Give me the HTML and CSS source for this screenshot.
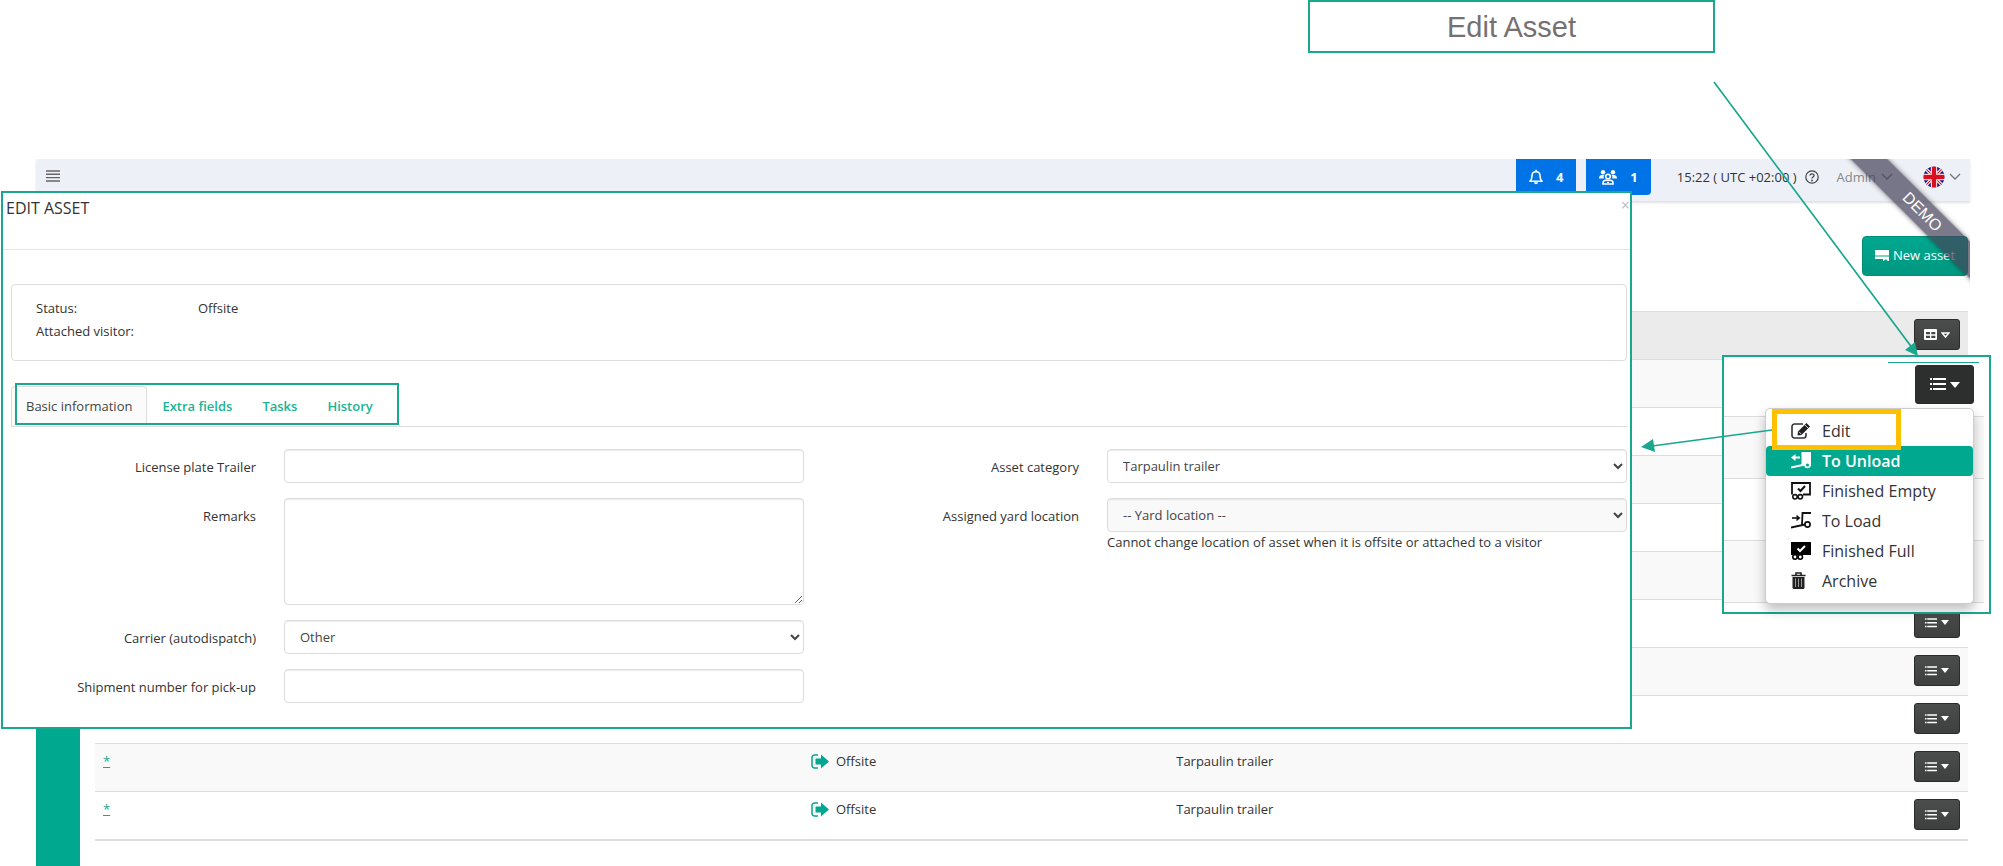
FILE: index.html
```html
<!DOCTYPE html>
<html lang="en">
<head>
    <meta charset="UTF-8">
    <meta name="viewport" content="width=device-width, initial-scale=1.0">
    <title>Edit Asset</title>
    <link rel="stylesheet" href="styles.css">
</head>
<body>
    <!-- shared icons -->
    <svg class="icon-defs" aria-hidden="true">
        <symbol id="icon-list" viewBox="0 0 16 13">
            <path d="M0 0h2v2H0zM3 0h13v2H3zM0 5h2v2H0zM3 5h13v2H3zM0 10h2v2H0zM3 10h13v2H3z" fill="#fff"/>
        </symbol>
        <symbol id="icon-caret" viewBox="0 0 10 6">
            <path d="M0 0h10L5 6z" fill="#fff"/>
        </symbol>
        <symbol id="icon-chevron" viewBox="0 0 12 7">
            <path d="M1 1l5 5 5-5" fill="none" stroke="#777" stroke-width="1.3"/>
        </symbol>
        <symbol id="icon-offsite" viewBox="0 0 18 15">
            <path d="M7 1H3.500A2.500 2.500 0 0 0 1 3.500v8A2.500 2.500 0 0 0 3.500 14H7" fill="none" stroke="#00a88f" stroke-width="1.500"/>
            <path d="M4.500 4.500H10V0.500l8 7-8 7v-4H4.500z" fill="#00a88f"/>
        </symbol>
    </svg>

    <h1 class="callout">Edit Asset</h1>

    <div class="app">
        <header class="topbar">
            <button class="menu-toggle" aria-label="Menu">
                <svg width="14" height="12" viewBox="0 0 14 12"><path d="M0 1h14M0 4.300h14M0 7.600h14M0 11h14" stroke="#666" stroke-width="1.400"/></svg>
            </button>
            <div class="topbar-right">
                <button class="counter counter-alerts">
                    <svg width="14" height="16" viewBox="0 0 14 16"><path d="M1 12.200C2.500 10.800 3 9.500 3 6.800 3 4.300 4.700 2.700 7 2.700s4 1.600 4 4.100c0 2.700.5 4 2 5.400z" fill="none" stroke="#fff" stroke-width="1.600" stroke-linejoin="round"/><path d="M6.200 0.700h1.600v2H6.200zM5 13.200h4a2 2 0 0 1-4 0z" fill="#fff"/></svg>
                    4
                </button>
                <button class="counter counter-users">
                    <svg width="18" height="15" viewBox="0 0 18 15">
                        <g fill="#fff"><circle cx="4" cy="2.300" r="2.200"/><circle cx="14" cy="2.300" r="2.200"/><path d="M0 8.500C0 6 1.200 5 3 5h2.500C4.600 6 4.500 7 4.800 8.500zM18 8.500C18 6 16.800 5 15 5h-2.500c.9 1 1 2 .7 3.500z"/></g>
                        <g fill="none" stroke="#fff" stroke-width="1.600"><circle cx="9" cy="6.500" r="2.300"/><path d="M4 14v-1c0-1.800 1.300-2.800 3-2.800h4c1.700 0 3 1 3 2.800v1z"/></g>
                        <circle cx="9" cy="12.500" r="1" fill="#fff"/>
                    </svg>
                    1
                </button>
                <span class="clock">15:22 ( UTC +02:00 )</span>
                <button class="help" aria-label="Help">
                    <svg width="14" height="14" viewBox="0 0 14 14"><circle cx="7" cy="7" r="6.200" fill="none" stroke="#444" stroke-width="1.200"/><path d="M5 5.600C5 3.200 9 3.200 9 5.500 9 7 7 6.900 7 8.600" fill="none" stroke="#444" stroke-width="1.300"/><circle cx="7" cy="10.400" r="0.900" fill="#444"/></svg>
                </button>
                <button class="user">Admin <svg width="12" height="7"><use href="#icon-chevron"/></svg></button>
                <button class="language" aria-label="Language">
                    <svg width="22" height="22" viewBox="0 0 22 22">
                        <clipPath id="flag"><circle cx="11" cy="11" r="10.500"/></clipPath>
                        <g clip-path="url(#flag)">
                            <path d="M0 0h22v22H0z" fill="#14147a"/>
                            <path d="M0 0l22 22M22 0L0 22" stroke="#fff" stroke-width="3.200"/>
                            <path d="M0 0l22 22M22 0L0 22" stroke="#d80f1f" stroke-width="1.200"/>
                            <path d="M11 0v22M0 11h22" stroke="#fff" stroke-width="6.400"/>
                            <path d="M11 0v22M0 11h22" stroke="#d80f1f" stroke-width="4.400"/>
                        </g>
                    </svg>
                    <svg width="12" height="7"><use href="#icon-chevron"/></svg>
                </button>
            </div>
        </header>

        <div class="page">
            <nav class="sidebar"></nav>
            <main class="content">
                <div class="actions">
                    <button class="btn-new">
                        <svg width="14" height="11" viewBox="0 0 14 11"><path d="M0 0h14v5.500H0zM0 6.500h14V11h-1.500a1.800 1.800 0 0 0-3.500 0H8V9H0z" fill="#fff"/></svg>
                        New asset
                    </button>
                </div>
                <table class="assets">
                    <thead>
                        <tr>
                            <th class="col-plate"></th>
                            <th class="col-status"></th>
                            <th></th>
                            <th class="col-menu">
                                <button class="btn-dark" aria-label="Columns">
                                    <svg width="13" height="11" viewBox="0 0 13 11"><path d="M1 0h11a1 1 0 0 1 1 1v9a1 1 0 0 1-1 1H1a1 1 0 0 1-1-1V1a1 1 0 0 1 1-1zM2 3v2.200h4V3zM7.300 3v2.200h4V3zM2 6.800V9h4V6.800zM7.300 6.800V9h4V6.800z" fill="#fff" fill-rule="evenodd"/></svg>
                                    <svg width="9" height="6" viewBox="0 0 9 6"><path d="M1.200 1h6.600L4.500 5z" fill="none" stroke="#fff" stroke-width="1.500"/></svg>
                                </button>
                            </th>
                        </tr>
                    </thead>
                    <tbody>
                        <tr><td></td><td></td><td></td><td><button class="btn-dark" aria-label="Actions"><svg width="12" height="10"><use href="#icon-list"/></svg><svg width="8" height="5"><use href="#icon-caret"/></svg></button></td></tr>
                        <tr><td></td><td></td><td></td><td><button class="btn-dark" aria-label="Actions"><svg width="12" height="10"><use href="#icon-list"/></svg><svg width="8" height="5"><use href="#icon-caret"/></svg></button></td></tr>
                        <tr><td></td><td></td><td></td><td><button class="btn-dark" aria-label="Actions"><svg width="12" height="10"><use href="#icon-list"/></svg><svg width="8" height="5"><use href="#icon-caret"/></svg></button></td></tr>
                        <tr><td></td><td></td><td></td><td><button class="btn-dark" aria-label="Actions"><svg width="12" height="10"><use href="#icon-list"/></svg><svg width="8" height="5"><use href="#icon-caret"/></svg></button></td></tr>
                        <tr><td></td><td></td><td></td><td><button class="btn-dark" aria-label="Actions"><svg width="12" height="10"><use href="#icon-list"/></svg><svg width="8" height="5"><use href="#icon-caret"/></svg></button></td></tr>
                        <tr><td></td><td></td><td></td><td><button class="btn-dark" aria-label="Actions"><svg width="12" height="10"><use href="#icon-list"/></svg><svg width="8" height="5"><use href="#icon-caret"/></svg></button></td></tr>
                        <tr><td></td><td></td><td></td><td><button class="btn-dark" aria-label="Actions"><svg width="12" height="10"><use href="#icon-list"/></svg><svg width="8" height="5"><use href="#icon-caret"/></svg></button></td></tr>
                        <tr><td></td><td></td><td></td><td><button class="btn-dark" aria-label="Actions"><svg width="12" height="10"><use href="#icon-list"/></svg><svg width="8" height="5"><use href="#icon-caret"/></svg></button></td></tr>
                        <tr>
                            <td><a href="#">*</a></td>
                            <td><span class="status"><svg width="18" height="15"><use href="#icon-offsite"/></svg>Offsite</span></td>
                            <td>Tarpaulin trailer</td>
                            <td><button class="btn-dark" aria-label="Actions"><svg width="12" height="10"><use href="#icon-list"/></svg><svg width="8" height="5"><use href="#icon-caret"/></svg></button></td>
                        </tr>
                        <tr>
                            <td><a href="#">*</a></td>
                            <td><span class="status"><svg width="18" height="15"><use href="#icon-offsite"/></svg>Offsite</span></td>
                            <td>Tarpaulin trailer</td>
                            <td><button class="btn-dark" aria-label="Actions"><svg width="12" height="10"><use href="#icon-list"/></svg><svg width="8" height="5"><use href="#icon-caret"/></svg></button></td>
                        </tr>
                    </tbody>
                </table>
            </main>
        </div>
        <div class="ribbon-wrap"><div class="ribbon">DEMO</div></div>
    </div>

    <form class="modal">
        <div class="modal-header">
            <h2>EDIT ASSET</h2>
            <button type="button" class="close" aria-label="Close">&times;</button>
        </div>
        <div class="modal-body">
            <dl class="summary">
                <dt>Status:</dt><dd>Offsite</dd>
                <dt>Attached visitor:</dt><dd></dd>
            </dl>
            <div class="tabs">
                <a href="#" class="tab active">Basic information</a>
                <a href="#" class="tab">Extra fields</a>
                <a href="#" class="tab">Tasks</a>
                <a href="#" class="tab">History</a>
                <div class="tabs-highlight"></div>
            </div>
        </div>
        <div class="fields">
            <div class="fields-col">
                <label for="plate">License plate Trailer</label>
                <input type="text" id="plate">
                <label for="remarks">Remarks</label>
                <textarea id="remarks"></textarea>
                <label for="carrier">Carrier (autodispatch)</label>
                <select id="carrier"><option>Other</option></select>
                <label for="shipment">Shipment number for pick-up</label>
                <input type="text" id="shipment">
            </div>
            <div class="fields-col">
                <label for="category">Asset category</label>
                <select id="category"><option>Tarpaulin trailer</option></select>
                <label for="location">Assigned yard location</label>
                <div>
                    <select id="location" class="readonly"><option>-- Yard location --</option></select>
                    <p class="hint">Cannot change location of asset when it is offsite or attached to a visitor</p>
                </div>
            </div>
        </div>
    </form>

    <!-- enlarged row menu -->
    <div class="inset">
        <div class="inset-row first"><button class="btn-dark large" aria-label="Actions"><svg width="16" height="13"><use href="#icon-list"/></svg><svg width="10" height="6"><use href="#icon-caret"/></svg></button></div>
        <div class="inset-row"><button class="btn-dark large" aria-label="Actions"></button></div>
        <div class="inset-row"><button class="btn-dark large" aria-label="Actions"></button></div>
        <div class="inset-row"><button class="btn-dark large" aria-label="Actions"></button></div>
        <div class="inset-row last"></div>
        <div class="inset-line"></div>
        <div class="dropdown">
            <button class="item">
                <svg width="20" height="18" viewBox="0 0 20 18"><path d="M12 2H3.500A2.500 2.500 0 0 0 1 4.500v9A2.500 2.500 0 0 0 3.500 16h9a2.500 2.500 0 0 0 2.500-2.500V11" fill="none" stroke="#333" stroke-width="1.600"/><path d="M7 9.500L15.500 1 19 4.500 10.500 13 6.500 13.500z" fill="#222"/><path d="M8 9.800l2.300 2.300M14 3l3 3" stroke="#fff" stroke-width="0.800"/></svg>
                Edit
            </button>
            <button class="item selected">
                <svg width="20" height="18" viewBox="0 0 20 18"><path d="M10.500 0H20v14h-1a2.500 2.500 0 0 0-4.500-1L10.500 13z" fill="#fff"/><circle cx="16.500" cy="13" r="2.400" fill="#00a88f" stroke="#fff" stroke-width="1.600"/><path d="M2 5.500h7M0 15.500l14-3" stroke="#fff" stroke-width="2" fill="none"/><path d="M0 5.500L4.500 2v7z" fill="#fff"/></svg>
                To Unload
            </button>
            <button class="item">
                <svg width="20" height="18" viewBox="0 0 20 18"><path d="M1 12.500V1h18v11.500h-7" fill="none" stroke="#111" stroke-width="1.800"/><path d="M7 6.500l2.500 2.500L14 4" fill="none" stroke="#111" stroke-width="2"/><g fill="none" stroke="#111" stroke-width="1.600"><circle cx="4" cy="14.800" r="2.200"/><circle cx="9.300" cy="14.800" r="2.200"/></g></svg>
                Finished Empty
            </button>
            <button class="item">
                <svg width="20" height="18" viewBox="0 0 20 18"><path d="M20 1h-8.500L11 12.500M0 15.500l14-3" fill="none" stroke="#111" stroke-width="1.800"/><circle cx="16.500" cy="12.500" r="2.600" fill="none" stroke="#111" stroke-width="1.700"/><path d="M1 6h5" stroke="#111" stroke-width="1.600"/><path d="M9.500 6L5.500 2.700v6.600z" fill="#111"/></svg>
                To Load
            </button>
            <button class="item">
                <svg width="20" height="18" viewBox="0 0 20 18"><path d="M0 0h20v13H0z" fill="#000"/><path d="M6.500 6.500L9 9l5-5" fill="none" stroke="#fff" stroke-width="2"/><g fill="#fff" stroke="#000" stroke-width="1.600"><circle cx="4" cy="15" r="2.200"/><circle cx="9.300" cy="15" r="2.200"/></g></svg>
                Finished Full
            </button>
            <button class="item">
                <svg width="20" height="18" viewBox="0 0 20 18"><path d="M0.500 3.500h14M5 3V1h5v2" fill="none" stroke="#222" stroke-width="1.600"/><path d="M1.500 5h12v10.500a1.500 1.500 0 0 1-1.500 1.500H3a1.500 1.500 0 0 1-1.500-1.500z" fill="#222"/><path d="M4.500 6.500v8.500M7.500 6.500v8.500M10.500 6.500v8.500" stroke="#999"/></svg>
                Archive
            </button>
            <div class="edit-highlight"></div>
        </div>
    </div>

    <svg class="arrows" width="403" height="500" viewBox="0 0 403 500" aria-hidden="true">
        <path d="M114 82L313 349M172 430L52 446" stroke="#1aa78e" stroke-width="1.700"/>
        <path d="M318 356L305 350L315 342zM41 447L53 439L55 452z" fill="#1aa78e"/>
    </svg>
</body>
</html>
```

FILE: styles.css
```css
* {
    box-sizing: border-box;
}
body {
    margin: 0;
    min-height: 100vh;
    display: flex;
    flex-direction: column;
    position: relative;
    background: white;
    color: #333;
    font-family: 'Open Sans', sans-serif;
    font-size: 13px;
    line-height: 20px;
}
button {
    font-family: inherit;
    font-size: inherit;
    line-height: inherit;
    color: inherit;
    background: none;
    border: none;
    padding: 0;
    cursor: pointer;
}
svg {
    flex: none;
}
.icon-defs {
    position: absolute;
    width: 0;
    height: 0;
}
.callout {
    align-self: flex-end;
    width: 407px;
    height: 53px;
    margin: 0 288px 0 0;
    border: 2px solid #1aa78e;
    font-family: 'Liberation Sans', Arial, sans-serif;
    font-size: 29px;
    font-weight: normal;
    line-height: 50px;
    color: #767171;
    text-align: center;
}

/* application */
.app {
    flex: 1;
    display: flex;
    flex-direction: column;
    position: relative;
    margin: 106px 33px 0 36px;
}
.topbar {
    display: flex;
    justify-content: space-between;
    height: 42px;
    padding: 0 9px 0 10px;
    background: #edf1f7;
    box-shadow: 0 2px 2px rgba(0, 0, 0, 0.12);
    position: relative;
}
.menu-toggle {
    display: flex;
    align-items: center;
    height: 34px;
}
.topbar-right {
    display: flex;
    align-items: flex-start;
}
.topbar-right > * {
    display: flex;
    align-items: center;
    height: 35px;
}
.topbar-right .counter {
    height: 36px;
    background: #0073e6;
    color: white;
    font-weight: bold;
    border-radius: 0 0 4px 4px;
    margin-right: 10px;
    padding: 0 13px;
    gap: 13px;
}
.topbar-right .counter-users {
    margin-right: 26px;
}
.clock {
    color: #333;
}
.help {
    margin-left: 8px;
}
.user {
    margin-left: 18px;
    gap: 5px;
    color: #888;
}
.language {
    margin-left: 30px;
    gap: 4px;
}
.page {
    flex: 1;
    display: flex;
}
.sidebar {
    width: 44px;
    background: #00a88f;
}
.content {
    flex: 1;
    padding: 35px 2px 0 15px;
}
.actions {
    display: flex;
    justify-content: flex-end;
    margin-bottom: 35px;
}
.btn-new {
    display: flex;
    align-items: center;
    justify-content: center;
    gap: 4px;
    width: 106px;
    height: 40px;
    padding-bottom: 2px;
    color: white;
    background: linear-gradient(#00a890, #00977f);
    border: 1px solid #008f78;
    border-radius: 4px;
}

/* asset table */
.assets {
    width: 100%;
    table-layout: fixed;
    border-collapse: collapse;
    border-bottom: 2px solid #ddd;
}
.assets th, .assets td {
    height: 48px;
    padding: 7px 8px;
    border-top: 1px solid #ddd;
    vertical-align: top;
    text-align: left;
}
.assets th {
    background: #ebebeb;
}
.assets tbody tr:nth-child(odd) {
    background: #f9f9f9;
}
.assets a {
    color: #1aa78e;
    text-decoration: underline;
}
.col-plate {
    width: 37.8%;
}
.col-status {
    width: 19.5%;
}
.assets .col-menu {
    width: 62px;
}
.status {
    display: flex;
    align-items: center;
    gap: 7px;
}
.btn-dark {
    display: flex;
    align-items: center;
    justify-content: center;
    gap: 4px;
    width: 46px;
    height: 31px;
    background: linear-gradient(#4a4d4c, #3d403f);
    border: 1px solid #2b2b2b;
    border-radius: 3px;
}

/* demo ribbon */
.ribbon-wrap {
    position: absolute;
    top: 0;
    right: 0;
    width: 130px;
    height: 130px;
    overflow: hidden;
    pointer-events: none;
}
.ribbon {
    position: absolute;
    top: 40px;
    right: -52px;
    width: 200px;
    height: 26px;
    background: rgba(68, 66, 88, 0.7);
    box-shadow: 0 0 5px rgba(0, 0, 0, 0.5);
    color: white;
    font-family: 'Liberation Sans', Arial, sans-serif;
    font-size: 16px;
    line-height: 26px;
    text-align: center;
    transform: rotate(45deg);
}

/* edit window */
.modal {
    position: absolute;
    top: 191px;
    left: 1px;
    right: 371px;
    height: 538px;
    background: white;
    border: 2px solid #1aa78e;
    overflow: hidden;
}
.modal-header {
    display: flex;
    justify-content: space-between;
    align-items: flex-start;
    height: 57px;
    padding: 4px 0 0 3px;
    border-bottom: 1px solid #e5e5e5;
}
.modal-header h2 {
    margin: 0;
    font-size: 16px;
    font-weight: normal;
    line-height: 22px;
}
.close {
    font-size: 16px;
    line-height: 16px;
    color: #bbb;
}
.modal-body {
    padding: 34px 3px 0 8px;
}
.summary {
    display: grid;
    grid-template-columns: 162px 1fr;
    grid-auto-rows: 23px;
    line-height: 23px;
    height: 77px;
    margin: 0;
    padding: 12px 24px;
    border: 1px solid #ddd;
    border-radius: 4px;
}
.summary dd {
    margin: 0;
}
.tabs {
    display: flex;
    position: relative;
    margin-top: 25px;
    border-bottom: 1px solid #ddd;
}
.tab {
    padding: 9px 14px 10px;
    border: 1px solid transparent;
    border-bottom: none;
    color: #1ab394;
    font-weight: 600;
    text-decoration: none;
}
.tab.active {
    background: #fbfbfb;
    border-color: #ddd;
    border-radius: 4px 4px 0 0;
    color: #444;
    font-weight: normal;
}
.tabs-highlight {
    position: absolute;
    top: -3px;
    left: 4px;
    width: 384px;
    height: 42px;
    border: 2px solid #1aa78e;
}
.fields {
    display: grid;
    grid-template-columns: 1fr 1fr;
    column-gap: 22px;
    padding: 22px 3px 0 0;
}
.fields-col {
    display: grid;
    grid-template-columns: 253fr 520fr;
    gap: 15px 28px;
    align-content: start;
}
.fields label {
    padding-top: 8px;
    text-align: right;
}
.fields input, .fields select, .fields textarea {
    display: block;
    width: 100%;
    height: 34px;
    padding: 6px 12px;
    background-color: white;
    border: 1px solid #ddd;
    border-radius: 4px;
    box-shadow: inset 0 1px 1px rgba(0, 0, 0, 0.08);
    color: #444;
    font-family: inherit;
    font-size: inherit;
}
.fields textarea {
    height: 107px;
}
.fields select {
    padding: 6px 0 6px 11px;
}
.fields .readonly {
    background-color: #f9f9f9;
}
.hint {
    margin: 0;
    line-height: 20px;
}

/* enlarged row menu */
.inset {
    position: absolute;
    top: 355px;
    right: 12px;
    width: 269px;
    height: 259px;
    padding-right: 5px;
    background: white;
    border: 2px solid #1aa78e;
}
.inset-row {
    display: flex;
    justify-content: flex-end;
    height: 62px;
    padding: 11px 10px 0 0;
    border-top: 1px solid #ddd;
}
.inset-row:nth-child(even) {
    background: #f9f9f9;
}
.inset-row.first {
    height: 59px;
    padding-top: 8px;
    border: none;
}
.inset-row.last {
    height: 10px;
}
.btn-dark.large {
    width: 59px;
    height: 39px;
    background: #2d2f2e;
}
.inset-line {
    position: absolute;
    top: 5px;
    right: 10px;
    width: 91px;
    height: 1px;
    background: #1aa78e;
}
.dropdown {
    position: absolute;
    top: 51px;
    right: 15px;
    width: 209px;
    padding: 7px 0;
    background: white;
    border: 1px solid #ccc;
    border-radius: 5px;
    box-shadow: 0 6px 12px rgba(0, 0, 0, 0.25);
}
.item {
    display: flex;
    align-items: center;
    gap: 11px;
    width: 100%;
    height: 30px;
    padding-left: 25px;
    font-size: 16px;
}
.item.selected {
    background: #00a88f;
    border-radius: 4px;
    color: white;
    font-weight: 600;
}
.edit-highlight {
    position: absolute;
    top: 0;
    left: 6px;
    width: 129px;
    height: 41px;
    border: 5px solid #ffc000;
}
.arrows {
    position: absolute;
    top: 0;
    right: 0;
    pointer-events: none;
}
```
